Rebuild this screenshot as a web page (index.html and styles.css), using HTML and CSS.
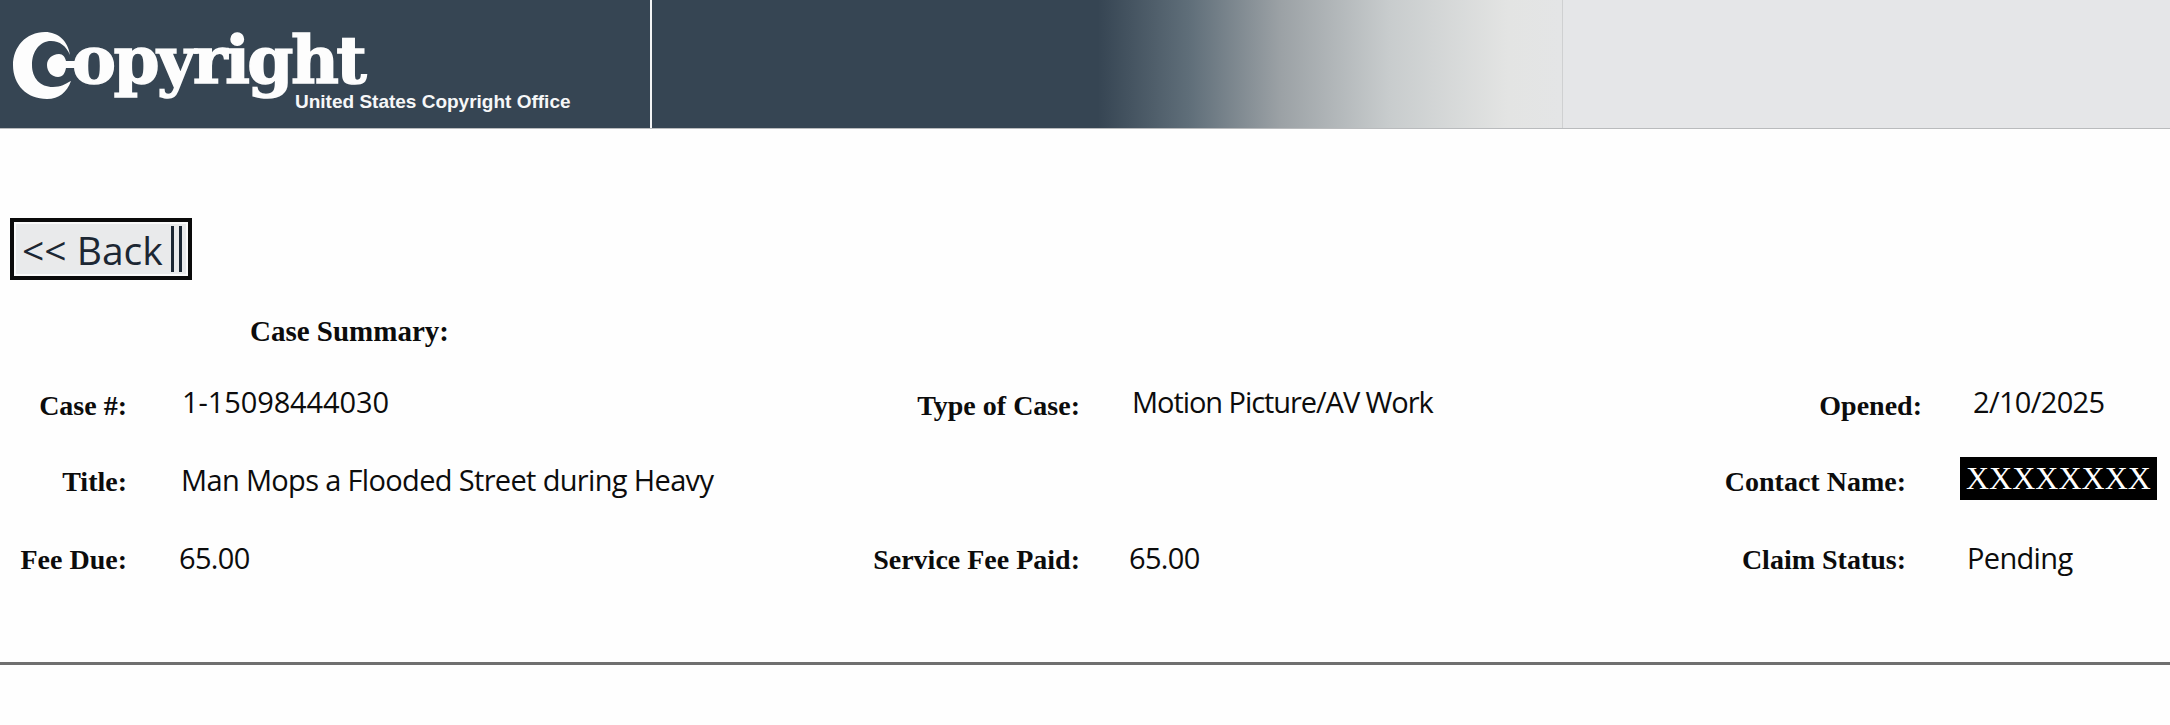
FILE: index.html
```html
<!DOCTYPE html>
<html lang="en">

<head>
    <meta charset="UTF-8" />
    <title>Case Summary</title>
    <link rel="stylesheet" href="styles.css">
</head>

<body>
    <header class="banner">
        <div class="banner-logo">
            <svg class="logo-c" viewBox="0 0 62 67" aria-hidden="true">
                <path fill="#fdfdfd"
                    d="M32 0C13 0 0 15 0 33C0 53 14 67 34 67C46 67 54 60 58 49C52 52 48 55 40 55C27 55 19 46 19 33C19 19 27 9 38 9C47 9 53 14 57 23C55 9 45 0 32 0Z" />
                <path fill="#fdfdfd"
                    d="M46 22C39 22 34 27 34 33C34 40 39 45 45 45C50 45 52 41 53 36L62 36L62 29L53 29C52 25 50 22 46 22Z" />
            </svg>
            <div class="logo-text">
                <span class="logo-word">opyright</span>
                <span class="logo-sub">United States Copyright Office</span>
            </div>
        </div>
        <div class="banner-fade"></div>
        <div class="banner-end"></div>
    </header>

    <main>
        <button class="back-btn">&lt;&lt; Back<span class="back-bars"></span></button>

        <h2 class="summary-title">Case Summary:</h2>

        <div class="case-grid">
            <div class="label label-low">Case #:</div>
            <div class="value value-case">1-15098444030</div>
            <div class="label label-low">Type of Case:</div>
            <div class="value value-type">Motion Picture/AV Work</div>
            <div class="label label-low label-opened">Opened:</div>
            <div class="value value-opened">2/10/2025</div>

            <div class="label">Title:</div>
            <div class="value">Man Mops a Flooded Street during Heavy</div>
            <div class="label"></div>
            <div class="value"></div>
            <div class="label">Contact Name:</div>
            <div class="value"><span class="redacted">XXXXXXXX</span></div>

            <div class="label">Fee Due:</div>
            <div class="value value-due">65.00</div>
            <div class="label">Service Fee Paid:</div>
            <div class="value value-fee">65.00</div>
            <div class="label">Claim Status:</div>
            <div class="value value-status">Pending</div>
        </div>

        <hr class="rule">
    </main>
</body>

</html>
```

FILE: styles.css
```css
body {
    margin: 0;
    background-color: #fefefe;
    color: #0c0c0c;
    font-family: "Open Sans", sans-serif;
}

/* Banner */
.banner {
    display: flex;
    height: 128px;
    border-bottom: 1px solid #b9bbbd;
    background-color: #364553;
}

.banner-logo {
    display: flex;
    align-items: flex-start;
    box-sizing: border-box;
    width: 652px;
    padding: 32px 0 0 13px;
    border-right: 2px solid #f4f5f6;
}

.logo-c {
    flex: none;
    width: 62px;
    height: 67px;
}

.logo-text {
    display: flex;
    flex-direction: column;
    margin-top: -8px;
    margin-left: -3px;
}

.logo-word {
    color: #fdfdfd;
    font-family: "DejaVu Serif", serif;
    font-size: 66px;
    font-weight: bold;
    line-height: 72px;
    letter-spacing: -2.6px;
    -webkit-text-stroke: 1.5px #fdfdfd;
}

.logo-sub {
    margin: -5px 0 0 223px;
    color: #f6f7f8;
    font-family: "Liberation Sans", sans-serif;
    font-size: 19px;
    font-weight: bold;
    line-height: 22px;
    white-space: nowrap;
}

.banner-fade {
    width: 910px;
    border-right: 1px solid #cfd0d1;
    background: linear-gradient(90deg, #364553 0%, #364553 49%, #5f6e79 59%, #9ba1a5 69%, #c8cccd 81%, #e3e4e3 94%, #e4e5e6 100%);
}

.banner-end {
    flex: 1;
    background-color: #e5e6e8;
}

/* Back button */
.back-btn {
    display: flex;
    align-items: center;
    box-sizing: border-box;
    width: 182px;
    height: 62px;
    margin: 89px 0 0 10px;
    padding: 0 0 0 8px;
    border: 4px solid #0b0b0b;
    outline: 2px solid #fafafa;
    outline-offset: -6px;
    background-color: #e9eaeb;
    color: #1c2733;
    font-family: "Open Sans", sans-serif;
    font-size: 39px;
    line-height: 1;
}

.back-bars {
    width: 5px;
    height: 46px;
    margin-left: 8px;
    border-left: 3px solid #1c2733;
    border-right: 3px solid #1c2733;
}

/* Summary */
.summary-title {
    margin: 34px 0 0 250px;
    font-family: "Liberation Serif", serif;
    font-size: 29px;
    font-weight: bold;
    line-height: 34px;
}

.case-grid {
    display: grid;
    grid-template-columns: 127px 653px 300px 526px 300px 1fr;
    grid-auto-rows: 78px;
    margin-top: 14px;
    align-items: center;
}

.label {
    padding-top: 6px;
    font-family: "Liberation Serif", serif;
    font-size: 28px;
    font-weight: bold;
    text-align: right;
    white-space: nowrap;
}

.label-low {
    padding-top: 10px;
}

.value {
    padding-left: 54px;
    font-size: 29px;
    letter-spacing: -0.66px;
    white-space: nowrap;
}

.value-case {
    padding-left: 55px;
    letter-spacing: -0.1px;
}

.value-type {
    padding-left: 52px;
    letter-spacing: -1.06px;
}

.label-opened {
    margin-right: -16px;
}

.value-opened {
    padding-left: 67px;
}

.value-due {
    padding-left: 52px;
}

.value-fee {
    padding-left: 49px;
}

.value-status {
    padding-left: 61px;
}

.redacted {
    display: inline-block;
    margin-top: -2px;
    padding: 0 6px;
    background-color: #000;
    color: #fff;
    font-family: "Liberation Serif", serif;
    font-size: 32px;
    letter-spacing: 0;
    line-height: 43px;
}

.rule {
    height: 3px;
    margin: 66px 0 0;
    border: none;
    background-color: #6f6f6f;
}
```
